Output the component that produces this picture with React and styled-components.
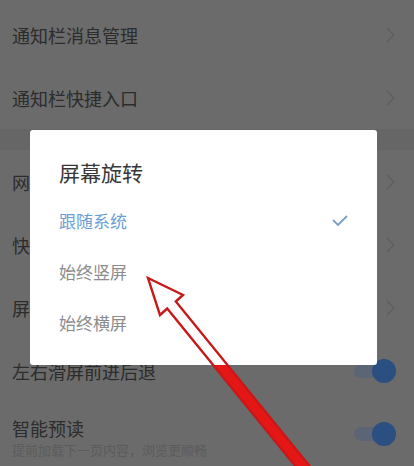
import styled, { createGlobalStyle } from "styled-components"

const GlobalStyle = createGlobalStyle`
  html, body {
    margin: 0;
    padding: 0;
    background: #6b6b6b;
  }
  body {
    font-family: "Noto Sans CJK SC", "Noto Sans", sans-serif;
  }
`

const Page = styled.div`
  position: relative;
  width: 414px;
  height: 466px;
  overflow: hidden;
  background: #6b6b6b;
`

const List = styled.div`
  display: flex;
  flex-direction: column;
  padding-top: 3px;
`

const Row = styled.div`
  display: flex;
  align-items: center;
  justify-content: space-between;
  height: ${(p) => p.h || 63}px;
  padding: 0 19px 0 12px;
  flex-shrink: 0;
`

const Gap = styled.div`
  height: 21px;
  background: #666666;
  flex-shrink: 0;
`

const Label = styled.div`
  font-size: 18px;
  line-height: 24px;
  color: #2c2c2c;
`

const TextBlock = styled.div`
  display: flex;
  flex-direction: column;
  gap: 2px;
  margin-top: 6px;
`

const Sub = styled.div`
  font-size: 13px;
  line-height: 16px;
  color: #5c5c5c;
`

const Toggle = styled.div`
  position: relative;
  width: 42px;
  height: 24px;
  margin-right: -1px;
  &::before {
    content: "";
    position: absolute;
    left: 0;
    top: 5px;
    width: 34px;
    height: 14px;
    border-radius: 7px;
    background: #5b6576;
  }
  &::after {
    content: "";
    position: absolute;
    right: 0;
    top: 0;
    width: 24px;
    height: 24px;
    border-radius: 50%;
    background: #2c4f82;
  }
`

const Dialog = styled.div`
  position: absolute;
  left: 30px;
  top: 130px;
  width: 347px;
  height: 235px;
  box-sizing: border-box;
  background: #ffffff;
  border-radius: 3px;
  padding: 27px 29px 0 29px;
  display: flex;
  flex-direction: column;
`

const Title = styled.div`
  font-size: 21px;
  line-height: 30px;
  color: #383838;
  margin-bottom: 8px;
`

const Option = styled.div`
  display: flex;
  align-items: center;
  justify-content: space-between;
  height: 51px;
  font-size: 17px;
  color: ${(p) => (p.active ? "#6a9fd5" : "#8c8c8c")};
`

const Overlay = styled.svg`
  position: absolute;
  left: 0;
  top: 0;
  pointer-events: none;
`

const Chevron = () => (
  <svg width="9" height="16" viewBox="0 0 9 16">
    <polyline points="1,1 8,8 1,15" fill="none" stroke="#5d5d5d" strokeWidth="1.3" />
  </svg>
)

const Check = () => (
  <svg width="16" height="12" viewBox="0 0 16 12">
    <polyline points="1,5 6,10 15,1" fill="none" stroke="#7b9dc6" strokeWidth="1.8" />
  </svg>
)

const arrow =
  "148,278 183,295 175.8,301.5 317.3,475.5 308.7,482.5 167.2,308.5 160,315"

const App = () => {
  return (
    <>
      <GlobalStyle />
      <Page>
        <List>
          <Row>
            <Label>通知栏消息管理</Label>
            <Chevron />
          </Row>
          <Row>
            <Label>通知栏快捷入口</Label>
            <Chevron />
          </Row>
          <Gap />
          <Row>
            <Label>网页字体大小</Label>
            <Chevron />
          </Row>
          <Row>
            <Label>快速翻页</Label>
            <Chevron />
          </Row>
          <Row>
            <Label>屏幕旋转</Label>
            <Chevron />
          </Row>
          <Row>
            <Label>左右滑屏前进后退</Label>
            <Toggle />
          </Row>
          <Row h={64}>
            <TextBlock>
              <Label>智能预读</Label>
              <Sub>提前加载下一页内容，浏览更顺畅</Sub>
            </TextBlock>
            <Toggle />
          </Row>
        </List>

        <Dialog>
          <Title>屏幕旋转</Title>
          <Option active>
            跟随系统
            <Check />
          </Option>
          <Option>始终竖屏</Option>
          <Option>始终横屏</Option>
        </Dialog>

        <Overlay width="414" height="466" viewBox="0 0 414 466">
          <defs>
            <clipPath id="below">
              <rect x="0" y="365" width="414" height="101" />
            </clipPath>
          </defs>
          <polygon points={arrow} fill="#e51616" clipPath="url(#below)" />
          <polygon points={arrow} fill="none" stroke="#c81818" strokeWidth="2.4" strokeLinejoin="miter" />
        </Overlay>
      </Page>
    </>
  )
}

export default App
